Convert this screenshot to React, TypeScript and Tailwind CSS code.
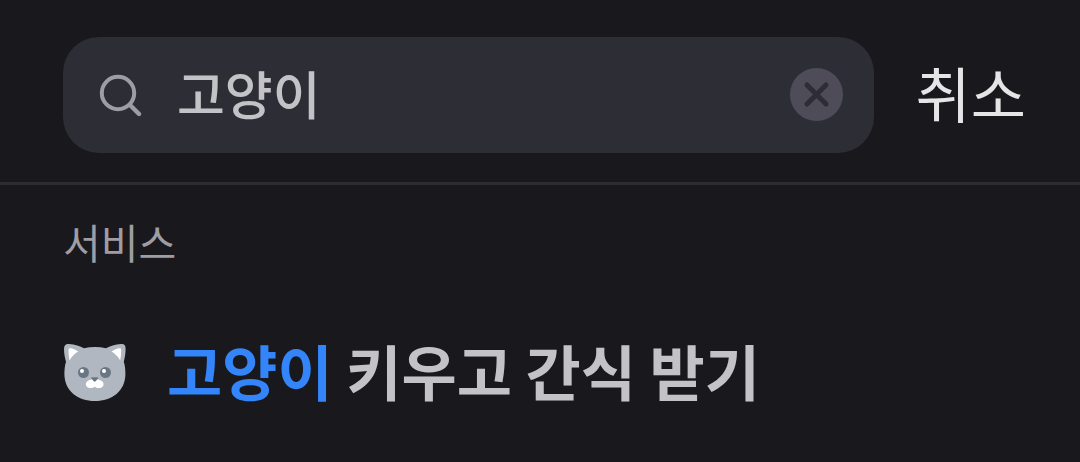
import { useRef, useState } from "react";

const services = [
  { id: "cat-snack", highlight: "고양이", rest: " 키우고 간식 받기" },
];

function SearchIcon() {
  return (
    <svg viewBox="0 0 44 44" className="size-11 shrink-0" fill="none" stroke="#9e9da4" strokeLinecap="round" aria-hidden="true">
      <circle cx="19" cy="20" r="16.2" strokeWidth="4" />
      <path d="M31 32L40 41" strokeWidth="4.4" />
    </svg>
  );
}

function ClearIcon() {
  return (
    <svg viewBox="0 0 54 54" className="size-[54px]" aria-hidden="true">
      <circle cx="26.500" cy="26.500" r="26.5" fill="#4d4c58" />
      <path d="M17 17L36 36M36 17L17 36" stroke="#2d2d35" strokeWidth="5" strokeLinecap="round" />
    </svg>
  );
}

function CatIcon() {
  return (
    <svg viewBox="0 0 64 60" className="h-[60px] w-16 shrink-0" aria-hidden="true">
      <path
        d="M1 6C1 2 3 .6 6 1C12 1.600 17 3 21 5.200C28 3.600 36 3.600 43 5.200C47 3 52 1.600 58 1C61 .6 62.800 2 62.600 6C62.600 11 61.600 15 60.800 19C62 22 62.400 27 62.400 31C62.400 48 49 58 32 58C15 58 1.400 48 1.400 31C1.400 27 1.800 22 3 19C2 15 1 11 1 6Z"
        fill="#b0b7c1"
      />
      <path d="M5.500 7C5.500 5.500 6.300 5 7.800 5.300C10.500 5.900 13 7 15.200 8.600C11.500 10.800 8.500 13.800 6.500 17.500C5.800 14 5.500 10.500 5.500 7Z" fill="#fff" />
      <path d="M58.200 7C58.200 5.500 57.400 5 55.900 5.300C53.200 5.900 50.700 7 48.500 8.600C52.200 10.800 55.200 13.800 57.200 17.500C57.900 14 58.200 10.500 58.200 7Z" fill="#fff" />
      <circle cx="20.500" cy="29.500" r="5.500" fill="#6b7684" />
      <circle cx="42.500" cy="29.500" r="5.500" fill="#6b7684" />
      <circle cx="19" cy="28" r="2" fill="#fff" />
      <circle cx="41" cy="28" r="2" fill="#fff" />
      <path d="M31.700 36.500C29 35.800 25.500 37 23.800 38.700C21.500 41.500 23.500 45 27.500 45C29.500 45 30.800 44.500 31.700 43.500C32.600 44.500 33.900 45 35.900 45C39.900 45 41.900 41.500 39.600 38.700C37.900 37 34.400 35.800 31.700 36.500Z" fill="#fff" />
      <path d="M29 34.200H34.400C35.300 34.200 35.500 35 35 35.600L32.600 38.200C32 38.800 31.400 38.800 30.800 38.200L28.400 35.600C27.900 35 28.100 34.200 29 34.200Z" fill="#6b7684" />
    </svg>
  );
}

export default function App() {
  const [query, setQuery] = useState("고양이");
  const inputRef = useRef<HTMLInputElement>(null);

  const clear = () => {
    setQuery("");
    inputRef.current?.focus();
  };

  return (
    <main className="min-h-screen bg-[#19181d] font-['Noto_Sans_CJK_KR',sans-serif]">
      <header className="flex items-center gap-[42px] border-b-3 border-[#2c2c31] pt-[37px] pr-[54px] pb-[29px] pl-[63px]">
        <div className="flex h-[116px] min-w-0 flex-1 items-center rounded-[36px] bg-[#2d2d35] pr-[30px] pl-9">
          <SearchIcon />
          <input
            ref={inputRef}
            type="text"
            aria-label="검색"
            value={query}
            onChange={(e) => setQuery(e.target.value)}
            className="ml-[34px] h-[86px] min-w-0 flex-1 bg-transparent pb-1.5 text-[52px] font-medium text-[#c3c2c6] outline-none"
          />
          <button type="button" aria-label="지우기" onClick={clear} className="shrink-0">
            <ClearIcon />
          </button>
        </div>
        <button type="button" className="shrink-0 pb-1.5 text-[60px] leading-20 text-[#e5e5e6]">
          취소
        </button>
      </header>

      <section className="px-[63px] pt-[26px]">
        <h2 className="text-[41px] leading-[60px] text-[#9e9da4]">서비스</h2>
        <ul className="pt-[59px]">
          {services.map((s) => (
            <li key={s.id}>
              <a href="#" className="flex items-center gap-10">
                <CatIcon />
                <span className="pb-1.5 text-[60px] leading-20 font-bold text-[#c3c2c6]">
                  <span className="text-[#3485fa]">{s.highlight}</span>
                  {s.rest}
                </span>
              </a>
            </li>
          ))}
        </ul>
      </section>
    </main>
  );
}
